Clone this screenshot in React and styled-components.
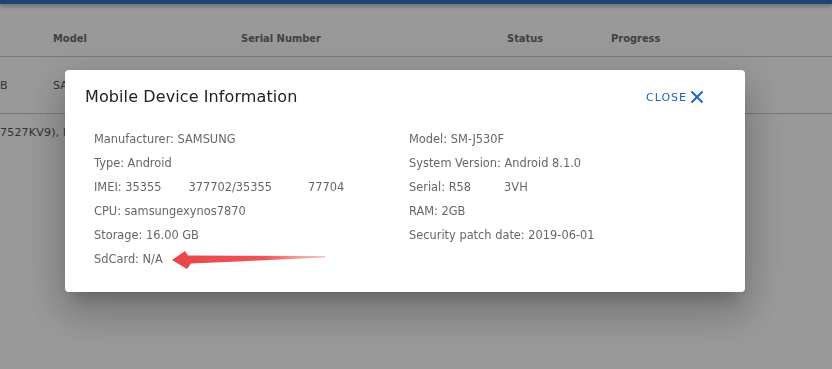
import React from "react";
import styled, { createGlobalStyle } from "styled-components";

const GlobalStyle = createGlobalStyle`
  html, body {
    margin: 0;
    padding: 0;
    background: #fff;
    font-family: "DejaVu Sans", "Noto Sans", sans-serif;
    overflow: hidden;
  }
`;

// page behind the dialog
const Page = styled.div`
  width: 832px;
  height: 369px;
  background: #fff;
`;

const TopBar = styled.div`
  height: 4px;
  background: #3475be;
  box-shadow: 0 2px 4px rgba(0, 0, 0, 0.35);
`;

const TableRow = styled.div`
  display: grid;
  grid-template-columns: 53px 188px 266px 104px 1fr;
  align-items: center;
  box-sizing: border-box;
  height: ${p => p.h}px;
  padding-top: ${p => p.pt || 0}px;
  border-bottom: 1px solid #c8c8c8;
  font-size: 11px;
  color: ${p => (p.head ? "#6e6e6e" : "#555")};
  font-weight: ${p => (p.head ? 700 : 400)};
  font-family: ${p =>
    p.head ? `"DejaVu Sans Condensed", "DejaVu Sans", sans-serif` : `"DejaVu Sans", sans-serif`};
  font-stretch: ${p => (p.head ? "condensed" : "normal")};
  white-space: nowrap;
  overflow: hidden;
`;

const Cell = styled.div`
  overflow: hidden;
`;

const LongRow = styled.div`
  padding-top: 12px;
  font-size: 11px;
  color: #555;
  white-space: nowrap;
  letter-spacing: 0.2px;
`;

// dialog
const Backdrop = styled.div`
  position: fixed;
  inset: 0;
  background: rgba(0, 0, 0, 0.4);
  padding: 70px 0 0 65px;
`;

const Dialog = styled.div`
  width: 680px;
  height: 222px;
  box-sizing: border-box;
  background: #fff;
  border-radius: 4px;
  box-shadow: 0 11px 15px -7px rgba(0, 0, 0, 0.2), 0 24px 38px 3px rgba(0, 0, 0, 0.14),
    0 9px 46px 8px rgba(0, 0, 0, 0.12);
  display: flex;
  flex-direction: column;
`;

const Header = styled.div`
  display: flex;
  align-items: center;
  justify-content: space-between;
  padding: 16px 36px 19px 20px;
  height: 22px;
`;

const Title = styled.h2`
  margin: 0;
  font-size: 16px;
  font-weight: 400;
  color: #222;
  letter-spacing: 0.1px;
  line-height: 20px;
`;

const CloseButton = styled.button`
  display: flex;
  align-items: center;
  gap: 3px;
  border: 0;
  background: none;
  padding: 4px 5px;
  color: #1a66c2;
  font-family: "DejaVu Sans", sans-serif;
  font-size: 11px;
  letter-spacing: 1px;
  cursor: pointer;
`;

const Grid = styled.div`
  display: grid;
  grid-template-columns: 315px 1fr;
  grid-auto-rows: 24px;
  padding: 0 29px;
`;

const Item = styled.div`
  display: flex;
  align-items: center;
  font-size: 11.4px;
  color: #666;
  white-space: nowrap;
`;

const Gap = styled.span`
  display: inline-block;
  width: ${p => p.w}px;
`;

const Arrow = () => (
  <svg width="156" height="24" viewBox="0 0 156 24" style={{ marginLeft: 8 }}>
    <defs>
      <linearGradient id="ar" x1="0" x2="1" y1="0" y2="0">
        <stop offset="0" stopColor="#e8474a" />
        <stop offset="0.6" stopColor="#ea5555" />
        <stop offset="1" stopColor="#f39a9a" stopOpacity="0.6" />
      </linearGradient>
    </defs>
    <polygon
      points="1,13 14,4 17,8.5 154,9 154,10.5 20,16.5 16,22"
      fill="url(#ar)"
    />
  </svg>
);

const XIcon = () => (
  <svg width="14" height="14" viewBox="0 0 14 14">
    <path d="M1.5 1.5 L12.5 12.5 M12.5 1.5 L1.5 12.5" stroke="#1a66c2" strokeWidth="2" />
  </svg>
);

export default function App() {
  return (
    <>
      <GlobalStyle />
      <Page>
        <TopBar />
        <TableRow head h={53} pt={16}>
          <Cell />
          <Cell>Model</Cell>
          <Cell>Serial Number</Cell>
          <Cell>Status</Cell>
          <Cell>Progress</Cell>
        </TableRow>
        <TableRow h={57}>
          <Cell>B</Cell>
          <Cell>SA</Cell>
          <Cell />
          <Cell />
          <Cell />
        </TableRow>
        <LongRow>7527KV9), In</LongRow>
      </Page>
      <Backdrop>
        <Dialog>
          <Header>
            <Title>Mobile Device Information</Title>
            <CloseButton>
              CLOSE <XIcon />
            </CloseButton>
          </Header>
          <Grid>
            <Item>Manufacturer: SAMSUNG</Item>
            <Item>Model: SM-J530F</Item>
            <Item>Type: Android</Item>
            <Item>System Version: Android 8.1.0</Item>
            <Item>
              IMEI: 35355<Gap w={27} />377702/35355<Gap w={36} />77704
            </Item>
            <Item>
              Serial: R58<Gap w={33} />3VH
            </Item>
            <Item>CPU: samsungexynos7870</Item>
            <Item>RAM: 2GB</Item>
            <Item>Storage: 16.00 GB</Item>
            <Item>Security patch date: 2019-06-01</Item>
            <Item>
              SdCard: N/A
              <Arrow />
            </Item>
          </Grid>
        </Dialog>
      </Backdrop>
    </>
  );
}
